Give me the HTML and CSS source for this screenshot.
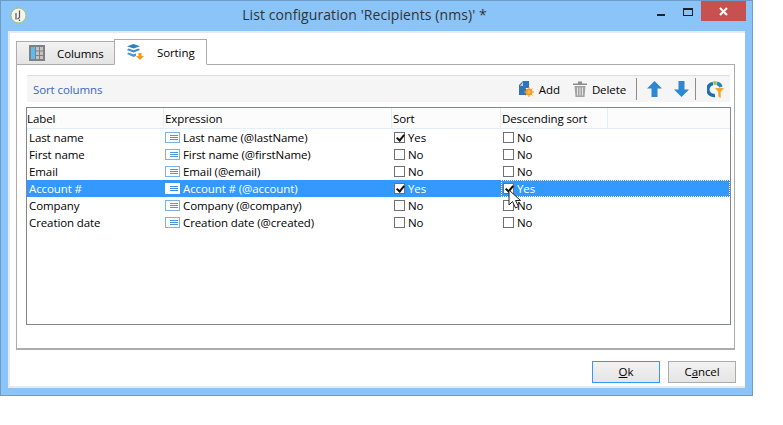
FILE: index.html
```html
<!DOCTYPE html>
<html lang="en">
  <head>
    <meta charset="UTF-8" />
    <title>List configuration</title>
    <link rel="stylesheet" href="styles.css">
  </head>
  <body>
    <div class="window">
      <div class="titlebar">
        <svg class="logo" width="17" height="17" viewBox="0 0 17 17">
          <circle cx="8.5" cy="8.5" r="7.5" fill="#f4f4ee" stroke="#9cc46a" stroke-width="1"/>
          <path d="M6 6v6.500M9.500 3.500v7M9.500 10.500l-2 1.500" stroke="#555" stroke-width="1.200" fill="none"/>
          <path d="M9.500 12.500v1.500" stroke="#555" stroke-width="1.200"/>
        </svg>
        <div class="title">List configuration 'Recipients (nms)' *</div>
        <div class="winbtns">
          <span class="min"></span>
          <span class="max"></span>
          <span class="close">
            <svg width="9" height="9" viewBox="0 0 9 9"><path d="M1 1l7 7M8 1l-7 7" stroke="#fff" stroke-width="2"/></svg>
          </span>
        </div>
      </div>

      <div class="content">
        <!-- tabs -->
        <div class="tabs">
          <div class="tab">
            <svg width="16" height="16" viewBox="0 0 16 16">
              <rect width="16" height="16" fill="#808080"/>
              <rect x="2" y="2" width="4" height="12" fill="#5bbcf2"/>
              <path d="M7 2h3v3.500H7zM11 2h3v3.500h-3zM7 6.500h3V10H7zM11 6.500h3V10h-3zM7 11h3v3H7zM11 11h3v3h-3z" fill="#c4c4c4"/>
            </svg>
            Columns
          </div>
          <div class="tab active">
            <svg width="17" height="16" viewBox="0 0 17 16">
              <path d="M6.500 0L13 2.300 6.500 4.600 0 2.300z" fill="#2f7fc4"/>
              <path d="M1.500 4.500l5 1.800 5-1.800L13 6 6.500 8.500 0 6z" fill="#3a8ad0"/>
              <path d="M1.500 8.500l5 1.800 2.500-.9v2.500l-2.500 1L0 10z" fill="#4a97d8"/>
              <path d="M11.500 9h3v3H17l-4 4-4-4h2.500z" fill="#f29a1f"/>
            </svg>
            Sorting
          </div>
        </div>

        <div class="panel">
          <!-- toolbar -->
          <div class="toolbar">
            <span class="toolbar-title">Sort columns</span>
            <div class="tools">
              <span class="tool">
                <svg width="15" height="16" viewBox="0 0 15 16">
                  <path d="M0 4l4-4h6v7H7v7H0z" fill="#2f76b8"/>
                  <path d="M1 5h3V1z" fill="#bcd6ee"/>
                  <circle cx="10" cy="11" r="3.500" fill="#f59a23"/>
                  <path d="M10 6v10M5 11h10M6.500 7.500l7 7M13.500 7.500l-7 7" stroke="#f59a23" stroke-width="1"/>
                  <circle cx="10" cy="11" r="1.500" fill="#fbc463"/>
                </svg>
                Add
              </span>
              <span class="tool">
                <svg width="14" height="16" viewBox="0 0 14 16">
                  <path d="M0 2.500h14v1.500H0zM5 0.500h4v2H5z" fill="#8c8c8c"/>
                  <path d="M1.500 5h11l-1 11h-9z" fill="#a3a3a3"/>
                  <path d="M4.500 6.500v8M7 6.500v8M9.500 6.500v8" stroke="#e6e6e6" stroke-width="1"/>
                </svg>
                Delete
              </span>
              <span class="sep"></span>
              <svg class="arrow" width="15" height="16" viewBox="0 0 15 16"><path d="M7.500 0L15 7.500H10.500V16h-6V7.500H0z" fill="#2f86d2"/></svg>
              <svg class="arrow" width="15" height="16" viewBox="0 0 15 16"><path d="M7.500 16L15 8.500H10.500V0h-6v8.500H0z" fill="#2f86d2"/></svg>
              <span class="sep"></span>
              <svg class="chart" width="17" height="17" viewBox="0 0 17 17">
                <path d="M6 2.400A6 6 0 0 0 8 14.500" fill="none" stroke="#1f6fb4" stroke-width="3.500"/>
                <path d="M6.500 2.300A6 6 0 0 1 9.500 2.200" fill="none" stroke="#8cc152" stroke-width="3.500"/>
                <path d="M10 2.300A6 6 0 0 1 14 6" fill="none" stroke="#2f7fc4" stroke-width="3.500"/>
                <path d="M8 7h9l-3.300 4v6l-2.400-1.500V11z" fill="#f5a52c"/>
              </svg>
            </div>
          </div>

          <!-- list -->
          <div class="grid">
            <div class="row head">
              <div>Label</div>
              <div>Expression</div>
              <div>Sort</div>
              <div>Descending sort</div>
              <div></div>
            </div>
            <div class="row">
              <div class="label">Last name</div>
              <div class="expr"><span class="fld"></span>Last name (@lastName)</div>
              <div class="chk"><span class="box on"></span>Yes</div>
              <div class="chk"><span class="box"></span>No</div>
            </div>
            <div class="row">
              <div class="label">First name</div>
              <div class="expr"><span class="fld"></span>First name (@firstName)</div>
              <div class="chk"><span class="box"></span>No</div>
              <div class="chk"><span class="box"></span>No</div>
            </div>
            <div class="row">
              <div class="label">Email</div>
              <div class="expr"><span class="fld"></span>Email (@email)</div>
              <div class="chk"><span class="box"></span>No</div>
              <div class="chk"><span class="box"></span>No</div>
            </div>
            <div class="row selected">
              <div class="label">Account #</div>
              <div class="expr"><span class="fld"></span>Account # (@account)</div>
              <div class="chk"><span class="box on"></span>Yes</div>
              <div class="chk focus"><span class="box on"></span>Yes</div>
            </div>
            <div class="row">
              <div class="label">Company</div>
              <div class="expr"><span class="fld"></span>Company (@company)</div>
              <div class="chk"><span class="box"></span>No</div>
              <div class="chk"><span class="box"></span>No</div>
            </div>
            <div class="row">
              <div class="label">Creation date</div>
              <div class="expr"><span class="fld"></span>Creation date (@created)</div>
              <div class="chk"><span class="box"></span>No</div>
              <div class="chk"><span class="box"></span>No</div>
            </div>
            <svg class="cursor" width="14" height="21" viewBox="0 0 14 21">
              <path d="M1 1v15l3.500-3.500 3 6.500 3-1.500-3-6h5z" fill="#fff" stroke="#222" stroke-width="1"/>
            </svg>
          </div>
        </div>

        <!-- buttons -->
        <div class="buttons">
          <div class="btn default"><u>O</u>k</div>
          <div class="btn">C<u>a</u>ncel</div>
        </div>
      </div>
    </div>
  </body>
</html>
```

FILE: styles.css
```css
html, body {
  margin: 0;
  background: #fff;
}
body {
  font-family: "Open Sans", "Noto Sans", sans-serif;
  font-size: 11.5px;
  letter-spacing: -0.1px;
  color: #000;
}
.window {
  box-sizing: border-box;
  width: 753px;
  height: 396px;
  background: #8ac4f8;
  border: 1px solid #6d9cc9;
  display: flex;
  flex-direction: column;
}
.titlebar {
  height: 30px;
  flex: none;
  display: flex;
  position: relative;
}
.logo {
  margin: 6px 0 0 9px;
}
.title {
  position: absolute;
  left: 0;
  right: 24px;
  top: 5px;
  text-align: center;
  font-size: 14px;
  letter-spacing: 0.08px;
  line-height: 18px;
  color: #333;
}
.winbtns {
  margin-left: auto;
  margin-right: 6px;
  display: flex;
  align-items: flex-start;
}
.min {
  width: 8px;
  height: 2px;
  background: #222;
  margin: 13px 18px 0 0;
}
.max {
  box-sizing: border-box;
  width: 10px;
  height: 8px;
  border: 1px solid #222;
  border-top-width: 2px;
  margin: 7px 8px 0 0;
}
.close {
  width: 45px;
  height: 20px;
  background: #c75050;
  display: flex;
  align-items: center;
  justify-content: center;
}
.content {
  flex: 1;
  margin: 0 7px 7px;
  background: #fff;
  border: 1px solid #e9e9e9;
  border-width: 2px 0 2px 2px;
  padding: 6px 0 0 6px;
  display: flex;
  flex-direction: column;
}
.tabs {
  display: flex;
  align-items: flex-end;
  height: 26px;
  margin-bottom: -1px;
  position: relative;
  z-index: 1;
}
.tab {
  box-sizing: border-box;
  height: 24px;
  width: 98px;
  display: flex;
  align-items: center;
  gap: 12px;
  padding: 0 0 0 12px;
  background: linear-gradient(#f2f2f2, #e4e4e4);
  border: 1px solid #acacac;
  border-right: none;
  border-bottom: 1px solid #acacac;
}
.tab.active {
  height: 26px;
  width: 93px;
  gap: 13px;
  padding-left: 12px;
  background: #fff;
  border-right: 1px solid #acacac;
  border-bottom-color: #fff;
}
.panel {
  box-sizing: border-box;
  width: 719px;
  height: 286px;
  border: 1px solid #acacac;
  border-bottom: 2px solid #acacac;
  padding: 10px 4px 0 10px;
}
.toolbar {
  box-sizing: border-box;
  height: 27px;
  background: #f5f5f5;
  border-top: 1px solid #dedede;
  display: flex;
  align-items: center;
  padding: 0 6px 0 6px;
}
.toolbar-title {
  color: #3a66c8;
}
.tools {
  margin-left: auto;
  display: flex;
  align-items: center;
}
.tool {
  display: flex;
  align-items: center;
  gap: 5px;
  margin-right: 13px;
}
.sep {
  width: 1px;
  height: 22px;
  background: #8c8c8c;
}
.tool + .sep {
  margin-left: -3px;
}
.arrow {
  margin-left: 10px;
}
.arrow + .arrow {
  margin-left: 12px;
}
.arrow + .sep {
  margin-left: 6px;
}
.chart {
  margin-left: 11px;
}
.grid {
  box-sizing: border-box;
  position: relative;
  margin: 5px -1px 0 -1px;
  height: 218px;
  background: #fff;
  border: 1px solid #82878c;
}
.row {
  display: grid;
  grid-template-columns: 137px 228px 109px 107px 1fr;
  height: 17px;
  line-height: 17px;
  white-space: nowrap;
}
.row.head {
  height: 21px;
  line-height: 21px;
  background: #fcfcfc;
  border-bottom: 1px solid #e3eefb;
  box-sizing: border-box;
}
.head div {
  border-right: 1px solid #e3eefb;
  padding-left: 1px;
}
.head div:first-child {
  padding-left: 0;
}
.head div:last-child {
  border-right: none;
}
.label {
  padding-left: 2px;
}
.expr {
  display: flex;
  align-items: center;
  padding-left: 1px;
}
.fld {
  box-sizing: border-box;
  width: 15px;
  height: 11px;
  margin-right: 3px;
  border: 1px solid #7eb2e0;
  background: repeating-linear-gradient(#4f96d8 0 1px, #fff 1px 2px) no-repeat 4px 2px / 8px 5px, #fff;
  flex: none;
}
.chk {
  display: flex;
  align-items: center;
  padding-left: 2px;
}
.box {
  box-sizing: border-box;
  width: 11px;
  height: 11px;
  margin-right: 3px;
  border: 1px solid #707070;
  background: #fff;
  position: relative;
  flex: none;
}
.box.on::after {
  content: "";
  position: absolute;
  left: 3px;
  top: 0;
  width: 3px;
  height: 6px;
  border: solid #111;
  border-width: 0 2px 2px 0;
  transform: rotate(40deg);
}
.selected {
  background: #3399ff;
  color: #fff;
}
.selected .fld {
  background: repeating-linear-gradient(#3f8fe0 0 1px, #fff 1px 2px) no-repeat 4px 2px / 8px 5px, #fff;
  border-color: #fff;
}
.focus {
  grid-column: 4 / 6;
  box-sizing: border-box;
  outline: 1px dotted #fff;
  outline-offset: -1px;
}
.cursor {
  position: absolute;
  left: 481px;
  top: 81px;
}
.buttons {
  display: flex;
  justify-content: flex-end;
  gap: 8px;
  margin: 11px 9px 0 0;
}
.btn {
  box-sizing: border-box;
  width: 68px;
  height: 22px;
  line-height: 20px;
  text-align: center;
  background: linear-gradient(#f2f2f2, #e5e5e5);
  border: 1px solid #acacac;
}
.btn.default {
  border-color: #3399ff;
}
```
